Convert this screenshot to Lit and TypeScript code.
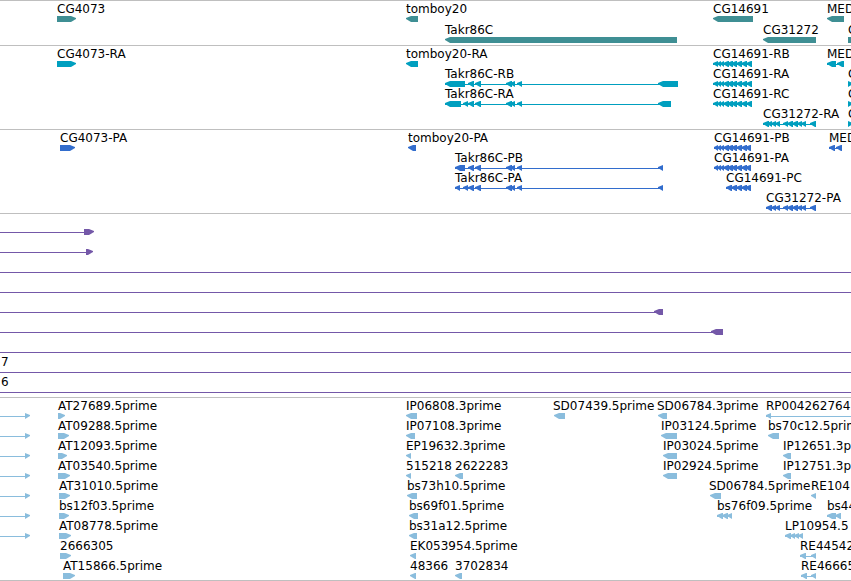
import { LitElement, html, svg, css } from "lit";
import { customElement, property } from "lit/decorators.js";
import { styleMap } from "lit/directives/style-map.js";

type Span = [number, number];

interface Feature {
  label?: string;
  dir: "left" | "right" | "none";
  /** Spans drawn as blocks, in track coordinates. */
  blocks: Span[];
  /** Connecting line when it reaches beyond the blocks. */
  line?: Span;
  /** Line that runs over the whole visible region. */
  through?: boolean;
  /** Label start when it differs from the feature start. */
  at?: number;
}

interface Track {
  name: string;
  kind: string;
  rows: Feature[][];
}

const left = (label: string, ...blocks: Span[]): Feature => ({ label, dir: "left", blocks });
const right = (label: string, ...blocks: Span[]): Feature => ({ label, dir: "right", blocks });
const bar = (label: string, ...blocks: Span[]): Feature => ({ label, dir: "none", blocks });
const through = (label = ""): Feature => ({ label, dir: "none", blocks: [], through: true, at: 1 });

const takrIntrons: Span[] = [[468, 474], [475, 481], [506, 512], [510, 515], [517, 522]];
const cg14691: Span[] = [
  [713, 718], [717, 721], [720, 724], [723, 729], [727, 733], [731, 737], [736, 742], [741, 747], [746, 752],
];
const cg14691Coding: Span[] = [
  [714, 718], [717, 721], [720, 724], [723, 729], [727, 733], [731, 737], [736, 742], [741, 747], [745, 751],
];
const cg31272Tail: Span[] = [[783, 788], [787, 793], [792, 798], [797, 802], [801, 806], [810, 816]];
const leader: Feature = { dir: "right", blocks: [[25, 30]], line: [0, 25] };

const tracks: Track[] = [
  {
    name: "Genes",
    kind: "gene",
    rows: [
      [right("CG4073", [57, 76]), left("tomboy20", [406, 418]), left("CG14691", [713, 753]), left("MED", [827, 844])],
      [left("Takr86C", [445, 677]), left("CG31272", [763, 816]), bar("C", [848, 870])],
    ],
  },
  {
    name: "Transcripts",
    kind: "transcript",
    rows: [
      [
        right("CG4073-RA", [57, 76]),
        left("tomboy20-RA", [406, 418]),
        left("CG14691-RB", ...cg14691),
        left("MED", [827, 836], [837, 844]),
      ],
      [
        left("Takr86C-RB", [445, 465], ...takrIntrons, [658, 678]),
        left("CG14691-RA", ...cg14691),
        right("C", [848, 853]),
      ],
      [
        left("Takr86C-RA", [445, 461], [463, 468], ...takrIntrons, [658, 671]),
        left("CG14691-RC", ...cg14691),
        right("C", [848, 853]),
      ],
      [
        left("CG31272-RA", [763, 769], [767, 772], [771, 776], [775, 780], ...cg31272Tail),
        right("C", [848, 853]),
      ],
    ],
  },
  {
    name: "Proteins",
    kind: "protein",
    rows: [
      [
        right("CG4073-PA", [60, 75]),
        left("tomboy20-PA", [408, 416]),
        left("CG14691-PB", ...cg14691Coding),
        left("MED", [829, 835], [836, 842]),
      ],
      [left("Takr86C-PB", [455, 465], ...takrIntrons, [658, 663]), left("CG14691-PA", ...cg14691Coding)],
      [
        left("Takr86C-PA", [455, 460], [463, 468], ...takrIntrons, [658, 663]),
        left("CG14691-PC", [726, 732], [731, 737], [736, 742], [741, 747], [745, 751]),
      ],
      [left("CG31272-PA", [766, 772], [771, 776], [775, 780], ...cg31272Tail)],
    ],
  },
  {
    name: "Alignments",
    kind: "alignment",
    rows: [
      [{ dir: "right", blocks: [[84, 94]], line: [0, 84] }],
      [{ dir: "right", blocks: [[86, 93]], line: [0, 86] }],
      [through()],
      [through()],
      [{ dir: "left", blocks: [[654, 663]], line: [0, 663] }],
      [{ dir: "left", blocks: [[711, 723]], line: [0, 723] }],
      [through()],
      [through("7")],
      [through("6")],
    ],
  },
  {
    name: "ESTs",
    kind: "est",
    rows: [
      [
        leader,
        right("AT27689.5prime", [58, 65]),
        left("IP06808.3prime", [406, 417]),
        { ...left("SD07439.5prime", [554, 565]), at: 553 },
        { ...left("SD06784.3prime", [658, 667]), at: 657 },
        { ...left("RP004262764", [766, 771]), line: [766, 900] },
      ],
      [
        leader,
        right("AT09288.5prime", [58, 69]),
        left("IP07108.3prime", [406, 415]),
        left("IP03124.5prime", [661, 677]),
        left("bs70c12.5prime", [768, 779]),
      ],
      [
        leader,
        right("AT12093.5prime", [58, 67]),
        left("EP19632.3prime", [406, 411]),
        left("IP03024.5prime", [663, 677]),
        left("IP12651.3prime", [783, 791]),
      ],
      [
        leader,
        right("AT03540.5prime", [58, 70]),
        left("515218", [406, 411]),
        left("2622283", [455, 463]),
        left("IP02924.5prime", [663, 677]),
        left("IP12751.3prime", [783, 791]),
      ],
      [
        leader,
        right("AT31010.5prime", [59, 70]),
        left("bs73h10.5prime", [407, 417]),
        { ...left("SD06784.5prime", [710, 721]), at: 709 },
        left("RE104", [811, 816]),
      ],
      [
        leader,
        right("bs12f03.5prime", [59, 69]),
        left("bs69f01.5prime", [409, 418]),
        left("bs76f09.5prime", [717, 723], [722, 728], [727, 732]),
        left("bs44", [827, 836], [835, 841]),
      ],
      [
        leader,
        right("AT08778.5prime", [59, 71]),
        left("bs31a12.5prime", [409, 417]),
        left("LP10954.5", [785, 791], [790, 795], [794, 799], [798, 803]),
      ],
      [
        right("2666305", [60, 71]),
        left("EK053954.5prime", [410, 416]),
        left("RE44542", [800, 806], [811, 816]),
      ],
      [
        right("AT15866.5prime", [63, 75]),
        left("48366", [410, 416]),
        left("3702834", [455, 462]),
        left("RE46665", [801, 807], [811, 816]),
      ],
    ],
  },
];

const HEAD = 5;

function outline([from, to]: Span, dir: Feature["dir"]): string {
  const neck = Math.min(HEAD, to - from);
  if (dir === "left") {
    return `${from},3 ${from},2 ${from + neck},0 ${to},0 ${to},6 ${from + neck},6`;
  }
  if (dir === "right") {
    return `${from},0 ${to - neck},0 ${to},2 ${to},3 ${to - neck},6 ${from},6`;
  }
  return `${from},0 ${to},0 ${to},6 ${from},6`;
}

@customElement("genome-track")
export class GenomeTrack extends LitElement {
  @property({ attribute: false }) track!: Track;

  static styles = css`
    :host {
      display: block;
      border-top: 1px solid #bfbfbf;
      padding-bottom: 3px;
      --row: 20px;
      color: var(--ink);
    }
    :host([kind="gene"]) { --ink: #3f8f94; --row: 21px; padding-bottom: 2px; }
    :host([kind="transcript"]) { --ink: #009fbf; }
    :host([kind="protein"]) { --ink: #326dcd; }
    :host([kind="alignment"]) { --ink: #7458a8; }
    :host([kind="est"]) { --ink: #8abddd; padding-bottom: 2px; }
    .rows { margin: 0; padding: 0; }
    .row { position: relative; height: var(--row); }
    .feature {
      position: absolute;
      top: 0;
      display: flex;
      flex-direction: column;
    }
    .feature.wide { left: 0; right: 0; }
    .label {
      height: 15px;
      line-height: 17px;
      color: #000;
      white-space: nowrap;
    }
    .glyph { display: block; height: 6px; overflow: visible; fill: currentColor; }
    .rule { height: 1px; margin-top: 3px; background: currentColor; }
    .wide .label { padding-left: 1px; }
  `;

  private feature(f: Feature) {
    if (f.through) {
      return html`<div class="feature wide">
        <span class="label">${f.label}</span><span class="rule"></span>
      </div>`;
    }
    const start = f.line ? f.line[0] : f.blocks[0][0];
    const end = f.line ? f.line[1] : f.blocks[f.blocks.length - 1][1];
    const origin = f.at ?? start;
    const joined = f.line || f.blocks.length > 1;
    return html`<div class="feature" style=${styleMap({ left: `${origin}px` })}>
      <span class="label">${f.label ?? ""}</span>
      <svg class="glyph" width=${end - origin} height="6" aria-hidden="true">
        ${joined
          ? svg`<rect x=${start - origin} y="3" width=${end - start} height="1"></rect>`
          : null}
        ${f.blocks.map(
          ([a, b]) => svg`<polygon points=${outline([a - origin, b - origin], f.dir)}></polygon>`,
        )}
      </svg>
    </div>`;
  }

  render() {
    return html`<div class="rows" role="list" aria-label=${this.track.name}>
      ${this.track.rows.map(
        (row) => html`<div class="row" role="listitem">${row.map((f) => this.feature(f))}</div>`,
      )}
    </div>`;
  }
}

@customElement("app-root")
export class AppRoot extends LitElement {
  static styles = css`
    :host {
      display: block;
      overflow: hidden;
      background: #fff;
      font: 12px "DejaVu Sans", sans-serif;
    }
    .browser { border-bottom: 1px solid #bfbfbf; }
  `;

  render() {
    return html`<main class="browser">
      ${tracks.map((t) => html`<genome-track kind=${t.kind} .track=${t}></genome-track>`)}
    </main>`;
  }
}
